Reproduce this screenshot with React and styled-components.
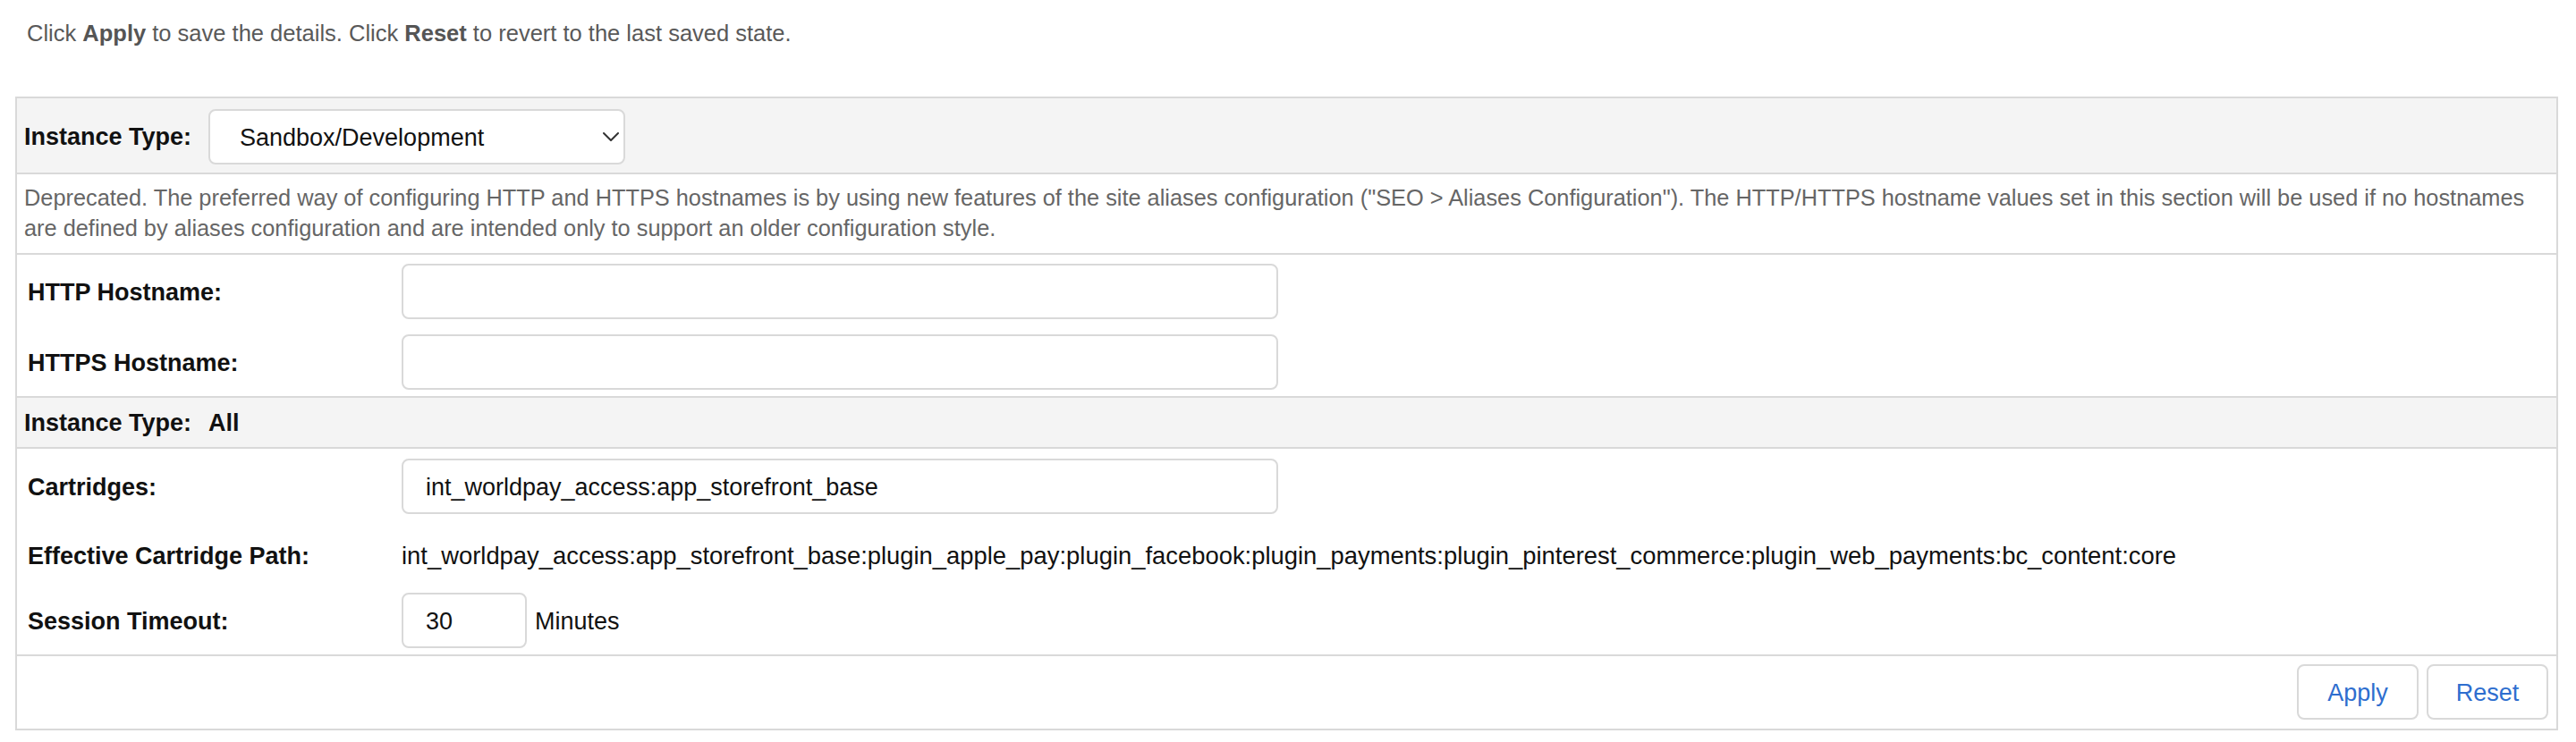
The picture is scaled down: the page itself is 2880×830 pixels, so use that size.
import React from "react";
import styled, { createGlobalStyle } from "styled-components";

const GlobalStyle = createGlobalStyle`
  html, body {
    margin: 0;
    padding: 0;
    background: #ffffff;
  }
  body {
    font-family: "Liberation Sans", Arial, Helvetica, sans-serif;
    color: #111111;
  }
  * { box-sizing: border-box; }
`;

const Page = styled.div`
  padding: 22px 20px 0 17px;
`;

const Intro = styled.p`
  margin: 0 0 56px 13px;
  font-size: 25.5px;
  line-height: 30px;
  color: #595959;
  b { font-weight: 700; color: #555555; }
`;

const Panel = styled.div`
  border: 2px solid #d9d9d9;
  background: #ffffff;
`;

const HeaderBar = styled.div`
  display: grid;
  grid-template-columns: 206px auto;
  align-items: center;
  justify-content: start;
  background: #f4f4f4;
  padding: ${(p) => (p.$compact ? "2px 8px 0" : "12px 8px 9px 8px")};
  height: ${(p) => (p.$compact ? "57px" : "auto")};
  border-top: ${(p) => (p.$divided ? "2px solid #d9d9d9" : "none")};
`;

const HeaderLabel = styled.span`
  font-size: 27px;
  font-weight: 700;
  color: #111111;
`;

const HeaderValue = styled.span`
  font-size: 27px;
  font-weight: 700;
  color: #111111;
`;

const SelectWrap = styled.div`
  position: relative;
  width: 466px;
  height: 62px;
`;

const Select = styled.select`
  appearance: none;
  -webkit-appearance: none;
  width: 100%;
  height: 100%;
  border: 2px solid #d9d9d9;
  border-radius: 8px;
  background: #ffffff;
  padding: 2px 50px 0 33px;
  font-family: inherit;
  font-size: 27px;
  color: #111111;
  outline: none;
`;

const Chevron = styled.svg`
  position: absolute;
  right: 7px;
  top: 26px;
  width: 18px;
  height: 10px;
  pointer-events: none;
`;

const Note = styled.div`
  border-top: 2px solid #d9d9d9;
  padding: 9px 8px 11px 8px;
  font-size: 25.35px;
  line-height: 34px;
  color: #666666;
`;

const FormSection = styled.div`
  display: grid;
  grid-template-columns: 418px 1fr;
  row-gap: 17px;
  align-items: center;
  border-top: 2px solid #d9d9d9;
  padding: ${(p) => p.$pad};
`;

const FieldLabel = styled.label`
  font-size: 27px;
  font-weight: 700;
  color: #111111;
  padding-top: 2px;
`;

const FieldValue = styled.div`
  display: flex;
  align-items: center;
  min-height: ${(p) => p.$h || "62px"};
  font-size: ${(p) => p.$size || "27px"};
  color: #111111;
`;

const TextInput = styled.input`
  width: ${(p) => p.$w};
  height: 62px;
  border: 2px solid #d9d9d9;
  border-radius: 8px;
  background: #ffffff;
  padding: 2px 25px 0;
  font-family: inherit;
  font-size: 27px;
  color: #111111;
  outline: none;
`;

const Unit = styled.span`
  margin-left: 9px;
  padding-top: 2px;
  font-size: 27px;
  color: #111111;
`;

const PathRow = styled.div`
  display: contents;
  & > * { margin-top: 5px; }
`;

const Footer = styled.div`
  display: flex;
  justify-content: flex-end;
  gap: 9px;
  border-top: 2px solid #d9d9d9;
  padding: 9px 9px 10px 9px;
`;

const Button = styled.button`
  width: 136px;
  height: 62px;
  border: 2px solid #d9d9d9;
  border-radius: 8px;
  background: #ffffff;
  padding: 2px 0 0;
  font-family: inherit;
  font-size: 27px;
  color: #2e6ecf;
  cursor: pointer;
`;

const cartridgePath =
  "int_worldpay_access:app_storefront_base:plugin_apple_pay:plugin_facebook:plugin_payments:plugin_pinterest_commerce:plugin_web_payments:bc_content:core";

export default function App() {
  return (
    <>
      <GlobalStyle />
      <Page>
        <Intro>
          Click <b>Apply</b> to save the details. Click <b>Reset</b> to revert to
          the last saved state.
        </Intro>
        <Panel>
          <HeaderBar>
            <HeaderLabel>Instance Type:</HeaderLabel>
            <SelectWrap>
              <Select defaultValue="sandbox">
                <option value="sandbox">Sandbox/Development</option>
                <option value="staging">Staging</option>
                <option value="production">Production</option>
              </Select>
              <Chevron viewBox="0 0 18 10" fill="none">
                <path d="M1 1 L9 9 L17 1" stroke="#333" strokeWidth="2" strokeLinecap="round" strokeLinejoin="round" />
              </Chevron>
            </SelectWrap>
          </HeaderBar>

          <Note>
            Deprecated. The preferred way of configuring HTTP and HTTPS hostnames is by
            using new features of the site aliases configuration ("SEO &gt; Aliases
            Configuration"). The HTTP/HTTPS hostname values set in this section will be
            used if no hostnames are defined by aliases configuration and are intended
            only to support an older configuration style.
          </Note>

          <FormSection $pad="10px 12px 7px">
            <FieldLabel htmlFor="http-host">HTTP Hostname:</FieldLabel>
            <FieldValue>
              <TextInput id="http-host" $w="980px" defaultValue="" />
            </FieldValue>
            <FieldLabel htmlFor="https-host">HTTPS Hostname:</FieldLabel>
            <FieldValue>
              <TextInput id="https-host" $w="980px" defaultValue="" />
            </FieldValue>
          </FormSection>

          <HeaderBar $compact $divided>
            <HeaderLabel>Instance Type:</HeaderLabel>
            <HeaderValue>All</HeaderValue>
          </HeaderBar>

          <FormSection $pad="11px 12px 7px">
            <FieldLabel htmlFor="cartridges">Cartridges:</FieldLabel>
            <FieldValue>
              <TextInput id="cartridges" $w="980px" defaultValue="int_worldpay_access:app_storefront_base" />
            </FieldValue>
            <PathRow>
              <FieldLabel>Effective Cartridge Path:</FieldLabel>
              <FieldValue $h="49px" $size="27.4px">{cartridgePath}</FieldValue>
            </PathRow>
            <FieldLabel htmlFor="timeout">Session Timeout:</FieldLabel>
            <FieldValue>
              <TextInput id="timeout" $w="140px" defaultValue="30" />
              <Unit>Minutes</Unit>
            </FieldValue>
          </FormSection>

          <Footer>
            <Button type="button">Apply</Button>
            <Button type="button">Reset</Button>
          </Footer>
        </Panel>
      </Page>
    </>
  );
}
